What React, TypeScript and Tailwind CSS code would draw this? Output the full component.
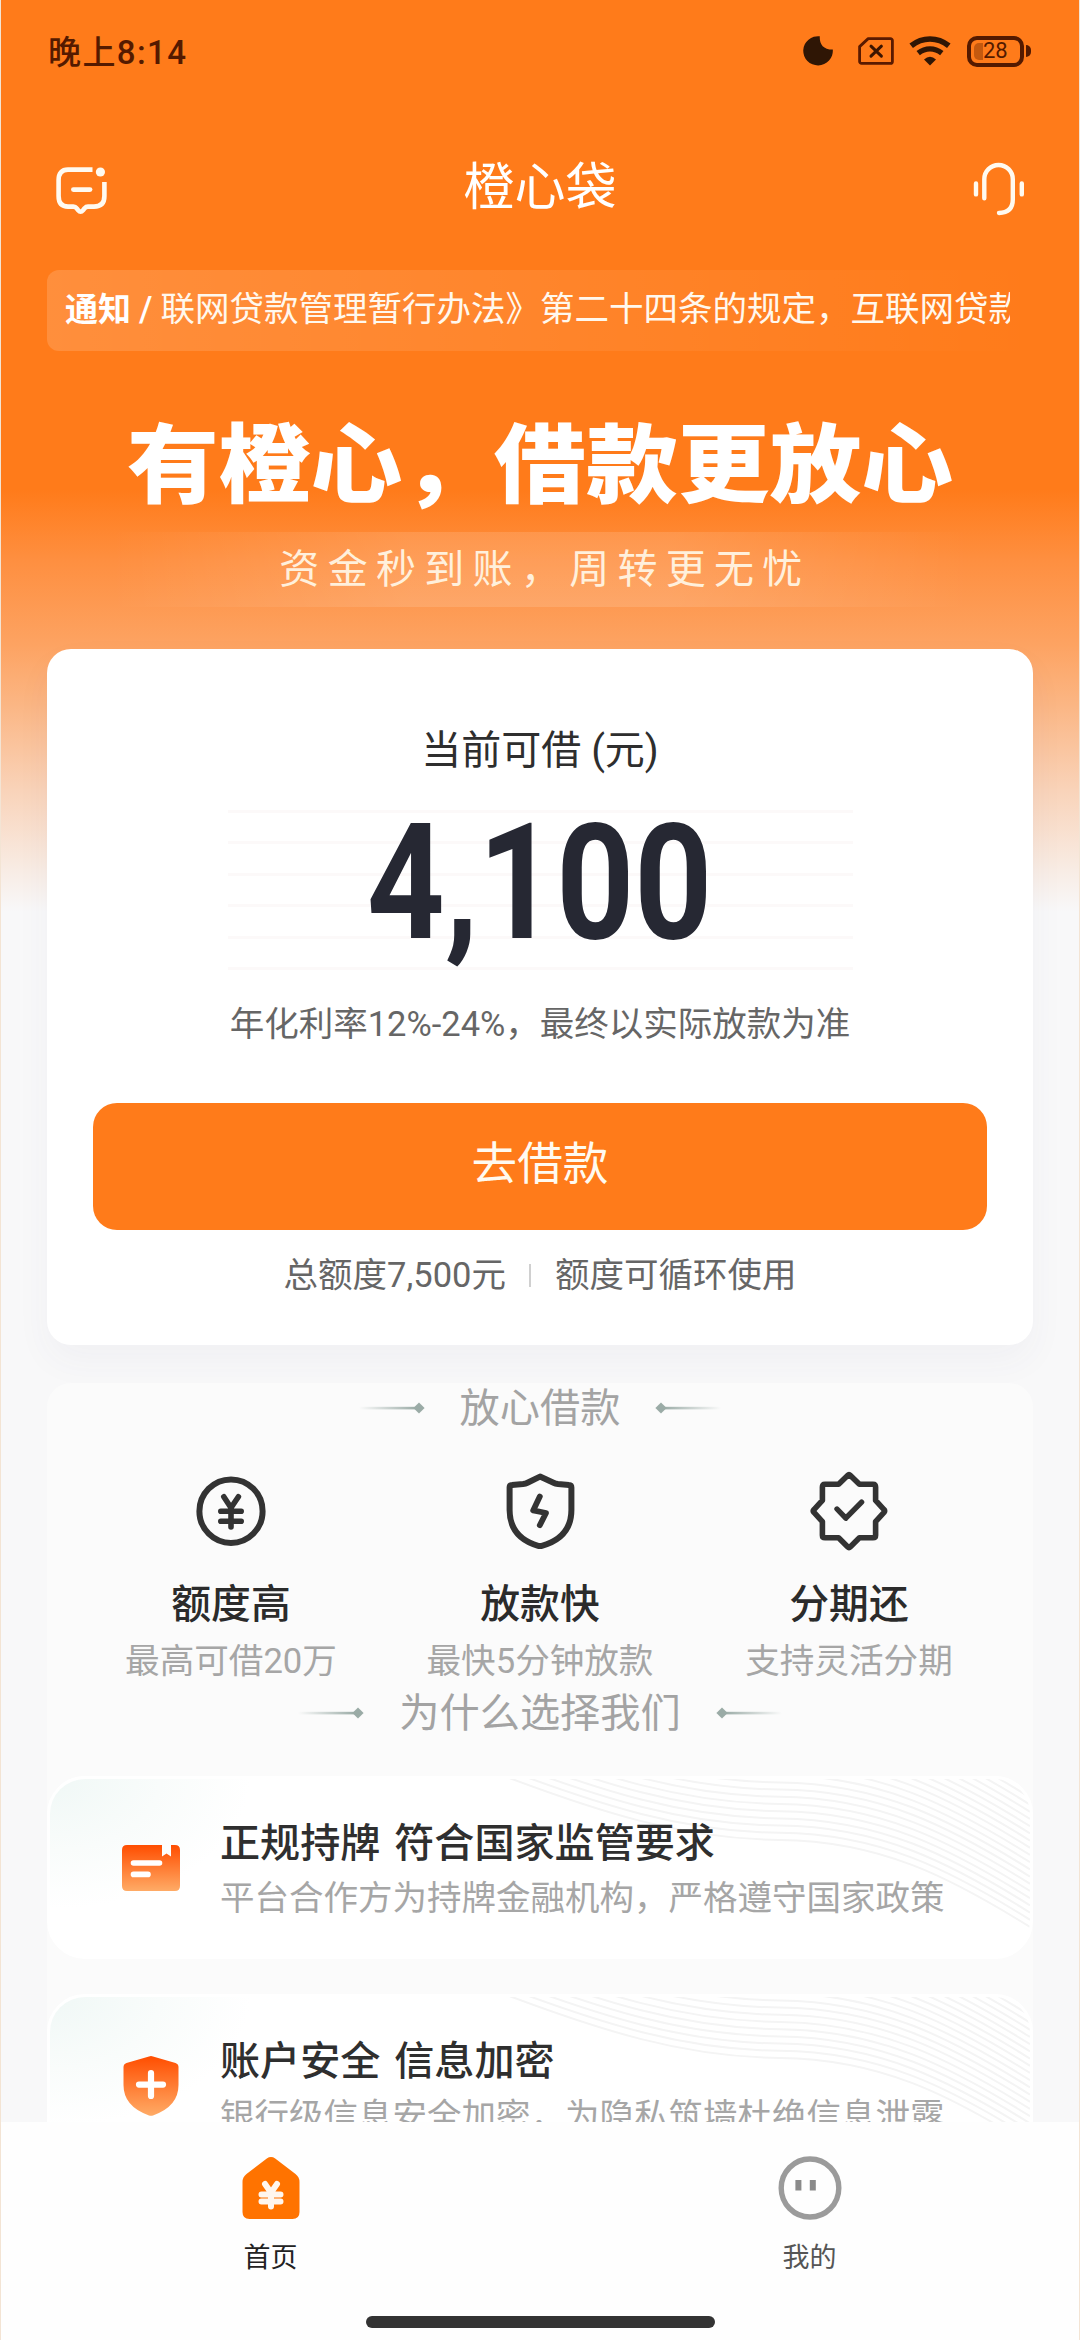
import type { ReactNode } from "react";

function MoonIcon() {
  return (
    <svg width="30" height="30" viewBox="0 0 30 30" fill="#2f1605">
      <path d="M16.8 0.3C16.4 7.6 19.8 13.6 29.8 13.6A14.8 14.6 0 1 1 16.8 0.3Z" />
    </svg>
  );
}

function NoSimIcon() {
  return (
    <svg width="36" height="28" viewBox="0 0 36 28" fill="none" stroke="#5a1a00" strokeWidth="2.8">
      <path d="M10.2 1.6H32.4a2 2 0 0 1 2 2V24.4a2 2 0 0 1-2 2H3.6a2 2 0 0 1-2-2V9.6Z" strokeLinejoin="round" />
      <path d="M13 9.2l10.4 10M23.4 9.2L13 19.2" stroke="#3d1500" strokeWidth="3" strokeLinecap="round" />
    </svg>
  );
}

function WifiIcon() {
  return (
    <svg width="42" height="30" viewBox="0 0 42 30" fill="none" stroke="#2f1605">
      <path d="M2.2 9.8C13.5 0.8 28.5 0.8 39.8 9.8" strokeWidth="5.6" />
      <path d="M9.2 17.2C16.5 11.4 25.5 11.4 32.8 17.2" strokeWidth="5.4" />
      <path d="M15 23.4Q21 18.2 27 23.4L21 29.6Z" fill="#2f1605" stroke="none" />
    </svg>
  );
}

function BatteryIcon() {
  return (
    <div className="flex items-center gap-[2px]">
      <div className="flex h-[31px] w-[57px] items-center rounded-[10px] border-4 border-[#541a00] pl-[3px]">
        <div className="h-[17px] w-[9px] rounded-l-[5px] bg-[#c4590f]" />
        <span className="text-[22px] leading-none font-normal text-[#541a00]">28</span>
      </div>
      <div className="h-[12px] w-[5px] rounded-r-full bg-[#541a00]" />
    </div>
  );
}

function MessageIcon() {
  return (
    <svg width="52" height="50" viewBox="0 0 52 50" fill="none" stroke="#fffaf0" strokeWidth="4.6" strokeLinecap="round" strokeLinejoin="round">
      <path d="M37.5 4.6H13Q3.6 4.6 3.6 15V31Q3.6 41.6 13 41.6H18.4Q20.4 41.6 21.6 43.2L23.2 45.2Q25.6 48 28 45.2L29.6 43.2Q31 41.6 33 41.6H39Q49.4 41.6 49.4 31V17" strokeLinecap="butt" />
      <path d="M18.4 24.6H35" strokeWidth="4.8" />
      <circle cx="45.4" cy="7" r="4.6" fill="#fffaf0" stroke="none" />
    </svg>
  );
}

function HeadsetIcon() {
  return (
    <svg width="52" height="54" viewBox="0 0 52 54" fill="none" stroke="#fffaf0" strokeWidth="4.4" strokeLinecap="round">
      <path d="M11.3 36.2V17.2A14.2 14.2 0 0 1 39.8 17.2V37.5Q39.8 50.6 26 51" />
      <path d="M3 21.4V32.4M48.8 21.4V32.4" strokeWidth="4.4" />
    </svg>
  );
}

function YenIcon() {
  return (
    <svg width="84" height="84" viewBox="0 0 84 84" fill="none" stroke="#333" strokeWidth="6" strokeLinecap="round" strokeLinejoin="round">
      <ellipse cx="42" cy="42.2" rx="31.6" ry="31.8" />
      <path d="M34.8 27.8L42 38.8L49.4 27.8M42 38.8V58M31.8 42.2H52.2M31.8 52.2H52.2" strokeWidth="5.6" />
    </svg>
  );
}

function ShieldBoltIcon() {
  return (
    <svg width="84" height="84" viewBox="0 0 84 84" fill="none" stroke="#333" strokeWidth="6" strokeLinecap="round" strokeLinejoin="round">
      <path d="M42 7.6L55.5 13.8Q57.5 14.8 60 15.1L71 15.9Q73.4 16 73.4 18.6V41Q73.4 68.5 43.8 76.8Q42 77.4 40.2 76.8Q11.6 68.5 11.6 41V18.6Q11.6 16 14 15.9L25 15.1Q27.5 14.8 29.5 13.8Z" />
      <path d="M41.8 27.6L35.2 41.4L48 44L41.8 56.2" strokeWidth="5.8" />
    </svg>
  );
}

function BadgeCheckIcon() {
  return (
    <svg width="84" height="84" viewBox="0 0 84 84" fill="none" stroke="#333" strokeWidth="5.6" strokeLinecap="round" strokeLinejoin="round">
      <path d="M40.6 6.4Q42 5 43.4 6.4L52.4 15.2H66Q68.6 15.2 68.6 18V31.4L77 40.6Q78.4 42 77 43.4L68.6 52.6V66.2Q68.6 68.8 66 68.8H52.4L43.4 77.8Q42 79.2 40.6 77.8L31.6 68.8H18Q15.4 68.8 15.4 66.2V52.6L7 43.4Q5.6 42 7 40.6L15.4 31.4V18Q15.4 15.2 18 15.2H31.6Z" />
      <path d="M30 40L38.8 49.2L54.6 33.2" strokeWidth="5.4" />
    </svg>
  );
}

function LicenseIcon() {
  return (
    <svg width="58" height="48" viewBox="0 0 58 48">
      <defs>
        <linearGradient id="license-fill" x1="0" y1="0" x2="0" y2="1">
          <stop offset="0" stopColor="#ff4d00" />
          <stop offset="1" stopColor="#ffab66" />
        </linearGradient>
      </defs>
      <path d="M5 1H40V12.5L44.5 9.6L49 12.5V1H53Q58 1 58 6V42Q58 47 53 47H5Q0 47 0 42V6Q0 1 5 1Z" fill="url(#license-fill)" />
      <path d="M11.5 19H37.5M11.5 30.4H26" stroke="#fff" strokeWidth="5.6" strokeLinecap="round" />
    </svg>
  );
}

function ShieldPlusIcon() {
  return (
    <svg width="56" height="62" viewBox="0 0 56 62">
      <defs>
        <linearGradient id="shield-fill" x1="0" y1="0" x2="0" y2="1">
          <stop offset="0" stopColor="#ff4d00" />
          <stop offset="1" stopColor="#ffab66" />
        </linearGradient>
      </defs>
      <path d="M26 1.4Q28 0.6 30 1.4L52.5 8Q55.5 9 55.5 12V30Q55.5 51.5 30 60.4Q28 61.2 26 60.4Q0.5 51.5 0.5 30V12Q0.5 9 3.5 8Z" fill="url(#shield-fill)" />
      <path d="M28 18V41M16 29.6H40" stroke="#fff" strokeWidth="6.2" strokeLinecap="round" />
    </svg>
  );
}

function HomeTabIcon() {
  return (
    <svg width="60" height="64" viewBox="0 0 60 64">
      <path d="M25.8 2.4Q30 -0.4 34.2 2.4L54.5 18Q58.5 21 58.5 26V56Q58.5 63 51.5 63H8.5Q1.5 63 1.5 56V26Q1.5 21 5.5 18Z" fill="#ff7300" />
      <path d="M24 28L30 36.6L36 28M30 36.6V50.5M20.5 38.6H39.5M20.5 45.6H39.5" fill="none" stroke="#fff6ee" strokeWidth="6" strokeLinecap="round" />
    </svg>
  );
}

function ProfileTabIcon() {
  return (
    <svg width="64" height="64" viewBox="0 0 64 64">
      <ellipse cx="32" cy="32" rx="28.8" ry="29" fill="none" stroke="#9b9b9b" strokeWidth="5.4" />
      <path d="M20.4 24V34.5M34.8 24V34.5" stroke="#8a8a8a" strokeWidth="6" />
    </svg>
  );
}

function Ornament({ flip = false }: { flip?: boolean }) {
  return (
    <svg width="66" height="12" viewBox="0 0 66 12" className={flip ? "-scale-x-100" : ""}>
      <defs>
        <linearGradient id="ornament-fade" x1="0" x2="1" y1="0" y2="0">
          <stop offset="0" stopColor="#9aaba6" stopOpacity="0" />
          <stop offset="1" stopColor="#9aaba6" />
        </linearGradient>
      </defs>
      <rect x="0" y="4.8" width="58" height="2.6" fill="url(#ornament-fade)" />
      <path d="M60 0.4L65.6 6L60 11.6L54.4 6Z" fill="#9aaba6" />
    </svg>
  );
}

function SectionHeading({ children }: { children: string }) {
  return (
    <div className="flex h-[50px] shrink-0 items-center justify-center gap-[35px]">
      <Ornament />
      <h2 className="pt-[2px] text-[40.2px] leading-[50px] font-normal text-[#a3a3a3]">{children}</h2>
      <Ornament flip />
    </div>
  );
}

function Feature({ icon, title, note }: { icon: ReactNode; title: string; note: string }) {
  return (
    <div className="flex w-[309px] flex-col items-center">
      {icon}
      <h3 className="mt-[26px] h-[52px] text-[39.8px] leading-[52px] font-medium text-[#2b2b2b]">{title}</h3>
      <p className="mt-[7px] h-[46px] text-[34.6px] leading-[46px] font-normal whitespace-nowrap text-[#a6a6a6]">{note}</p>
    </div>
  );
}

const WAVES = Array.from({ length: 24 }, (_, i) => i);

function ReasonCard({ icon, title, note }: { icon: ReactNode; title: string; note: string }) {
  return (
    <article className="relative h-[183px] shrink-0 overflow-hidden rounded-[38px] border-[3px] border-white bg-white">
      <div className="absolute inset-0 bg-[radial-gradient(ellipse_200px_130px_at_0_0,#f0f8f6,#f9fcfb_55%,#ffffff)]" />
      <svg className="absolute inset-0" width="980" height="177" viewBox="0 0 980 177" fill="none" stroke="#f4f4f4" strokeWidth="2">
        {WAVES.map((i) => (
          <path key={i} d="M400 -24C560 40 640 60 730 61C830 62 900 98 980 148" transform={`translate(0 ${-i * 7.2})`} />
        ))}
      </svg>
      <div className="relative flex h-full items-center">
        <div className="ml-[71px] flex w-[60px] justify-center">{icon}</div>
        <div className="mt-[7px] ml-[39px]">
          <h3 className="h-[54px] text-[40.1px] leading-[54px] font-medium whitespace-nowrap text-[#2f2f2f] [word-spacing:4px]">{title}</h3>
          <p className="h-[54px] text-[34.5px] leading-[54px] font-normal whitespace-nowrap text-[#a6a6a6]">{note}</p>
        </div>
      </div>
    </article>
  );
}

export default function App() {
  return (
    <div className="flex h-[2340px] w-[1080px] flex-col overflow-hidden border-x border-[#f3e4d4] bg-[#f8f8f9] font-[Roboto,'Noto_Sans_CJK_SC',sans-serif]">
      <main className="flex h-[2122px] shrink-0 flex-col overflow-hidden bg-[linear-gradient(to_bottom,#ff7b1a_0px,#ff7b1a_490px,#fe8f40_560px,#fda362_645px,#fbb684_705px,#f9d3b9_790px,#f8ece4_870px,#f8f8f9_912px)]">
        <header className="flex h-[102px] shrink-0 items-center justify-between pr-[48px] pl-[47px]">
          <span className="pt-[3px] text-[33px] leading-none font-medium tracking-[1.4px] text-[#541a00]">晚上8:14</span>
          <div className="flex items-center">
            <MoonIcon />
            <div className="ml-[25px]"><NoSimIcon /></div>
            <div className="ml-[15px]"><WifiIcon /></div>
            <div className="ml-[16px]"><BatteryIcon /></div>
          </div>
        </header>

        <nav className="flex h-[168px] shrink-0 items-center justify-between px-[54px]">
          <div className="pt-[8px]"><MessageIcon /></div>
          <h1 className="pt-[4px] text-[51px] leading-[60px] font-normal text-white">橙心袋</h1>
          <div className="pt-[6px]"><HeadsetIcon /></div>
        </nav>

        <div className="mx-[46px] flex h-[81px] shrink-0 items-center rounded-xl bg-linear-to-r from-white/15 to-white/0 pr-[23px] pb-[2px] pl-[18px] text-[34.5px] text-white">
          <div className="flex flex-1 items-center overflow-hidden whitespace-nowrap">
            <span className="text-[33px] font-bold">通知</span>
            <span className="mx-[8px] font-medium">/</span>
            <span className="min-w-0 flex-1 overflow-hidden text-[#fff8ee]">联网贷款管理暂行办法》第二十四条的规定，互联网贷款</span>
          </div>
        </div>

        <h2 className="mt-[61px] h-[110px] shrink-0 scale-y-[0.94] text-center text-[91.8px] leading-[110px] font-black whitespace-nowrap text-white">
          有橙心，借款更放心
        </h2>

        <div className="mx-[110px] mt-[10px] flex h-[75px] shrink-0 items-center justify-center bg-[linear-gradient(to_right,transparent,rgba(255,255,255,0.13)_35%,rgba(255,255,255,0.13)_65%,transparent)]">
          <span className="pl-[10px] text-[40px] font-normal tracking-[8.3px] whitespace-nowrap text-[#fff0dc]">资金秒到账，周转更无忧</span>
        </div>

        <section className="mx-[46px] mt-[42px] flex h-[696px] shrink-0 flex-col items-center rounded-3xl bg-white pt-[76px] shadow-[0_16px_36px_rgba(60,70,110,0.045)]">
          <p className="h-[52px] text-[40px] leading-[52px] text-[#2e2e2e]">当前可借 (元)</p>
          <div className="relative mt-[33px] h-[160px] w-[625px]">
            <div className="absolute inset-0 flex flex-col justify-between">
              {[0, 1, 2, 3, 4, 5].map((line) => (
                <div key={line} className="h-[3px] bg-[#fcf9f9]" />
              ))}
            </div>
            <div className="relative flex h-full items-center justify-center pb-[14px]">
              <span className="inline-block scale-x-[0.845] text-[161px] leading-none font-bold text-[#262833]">4,100</span>
            </div>
          </div>
          <p className="mt-[30px] h-[48px] text-[34.5px] leading-[48px] whitespace-nowrap text-[#666]">年化利率12%-24%，最终以实际放款为准</p>
          <button className="mt-[55px] h-[127px] w-[894px] rounded-3xl bg-[#ff7b1a] pb-[2px] text-[45.6px] text-[#fffaf0]">去借款</button>
          <div className="mt-[21px] flex h-[48px] items-center text-[34.5px] leading-[48px] text-[#666]">
            <span>总额度7,500元</span>
            <span className="mr-[24px] ml-[23px] h-[23px] w-[2px] bg-[#d0d0d0]" />
            <span>额度可循环使用</span>
          </div>
        </section>

        <section className="mx-[46px] mt-[38px] flex flex-1 flex-col rounded-t-3xl bg-[#fbfbfb]">
          <SectionHeading>放心借款</SectionHeading>
          <div className="mt-[36px] flex shrink-0 justify-center">
            <Feature icon={<YenIcon />} title="额度高" note="最高可借20万" />
            <Feature icon={<ShieldBoltIcon />} title="放款快" note="最快5分钟放款" />
            <Feature icon={<BadgeCheckIcon />} title="分期还" note="支持灵活分期" />
          </div>
          <div className="mt-[4px] flex shrink-0 flex-col">
            <SectionHeading>为什么选择我们</SectionHeading>
          </div>
          <div className="mt-[38px] flex flex-col gap-[35px]">
            <ReasonCard icon={<LicenseIcon />} title="正规持牌 符合国家监管要求" note="平台合作方为持牌金融机构，严格遵守国家政策" />
            <ReasonCard icon={<ShieldPlusIcon />} title="账户安全 信息加密" note="银行级信息安全加密，为隐私筑墙杜绝信息泄露" />
          </div>
        </section>
      </main>

      <footer className="flex h-[218px] shrink-0 flex-col items-center bg-[#fefefe]">
        <div className="flex w-full pt-[34px]">
          <div className="flex w-1/2 flex-col items-center">
            <HomeTabIcon />
            <span className="mt-[18px] h-[40px] text-[27px] leading-[40px] text-[#222]">首页</span>
          </div>
          <div className="flex w-1/2 flex-col items-center">
            <ProfileTabIcon />
            <span className="mt-[18px] h-[40px] text-[27px] leading-[40px] text-[#555]">我的</span>
          </div>
        </div>
        <div className="mt-[38px] h-[12px] w-[349px] rounded-full bg-[#333]" />
      </footer>
    </div>
  );
}
